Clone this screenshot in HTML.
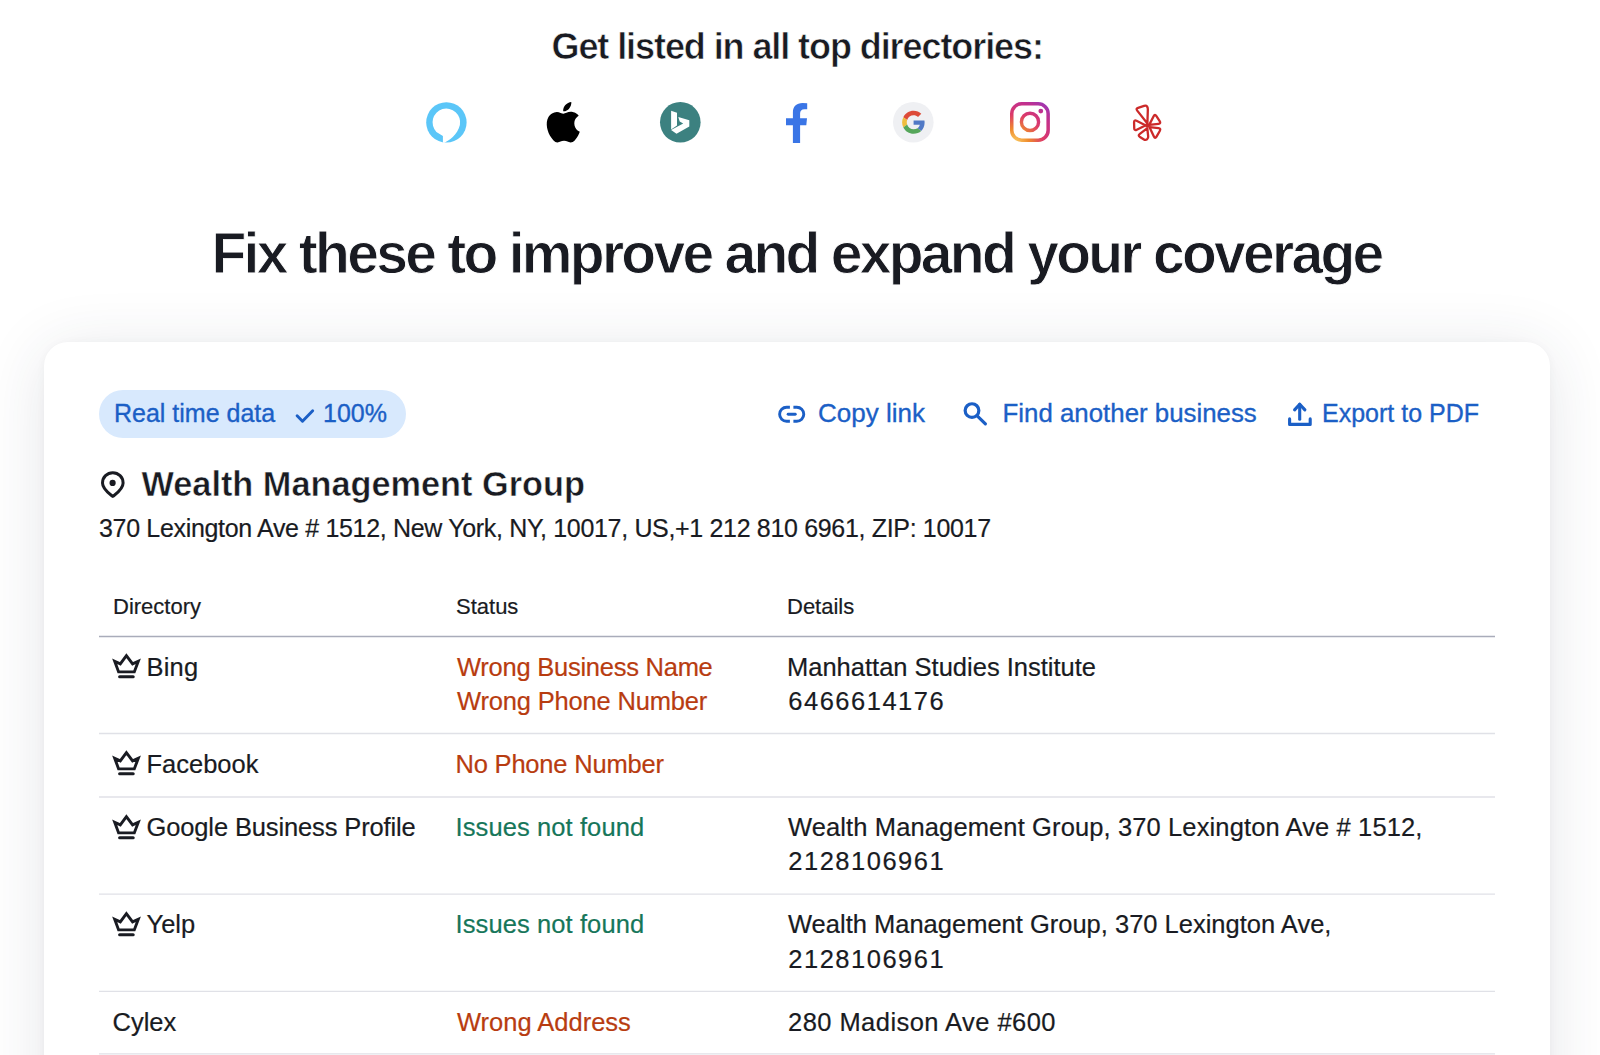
<!DOCTYPE html>
<html><head><meta charset="utf-8">
<style>
html,body{margin:0;padding:0;background:#fff;}
body{width:1600px;height:1055px;overflow:hidden;position:relative;font-family:"Liberation Sans",sans-serif;color:#191b22;}
.t{position:absolute;white-space:nowrap;line-height:1;-webkit-text-stroke-width:0.2px;}
.b{font-weight:bold;}
.blue{color:#1b5fc6;-webkit-text-stroke:0.35px #1b5fc6;}
.red{color:#b83c10;}
.green{color:#16765a;}
.ic{position:absolute;overflow:visible;}
#card{position:absolute;left:44px;top:342px;width:1506px;height:800px;background:#fff;border-radius:24px;box-shadow:0 1px 10px rgba(45,50,70,0.035),0 8px 64px rgba(45,50,70,0.12);}
#pill{position:absolute;left:99px;top:390px;width:306.5px;height:48px;border-radius:24px;background:#d8e9fd;}
.hline{position:absolute;left:99px;width:1396px;height:1px;background:#dfe0e6;}
</style></head>
<body>
<div class="t b" id="t1" style="left:551.5px;top:28.5px;font-size:36px;letter-spacing:-1.08px;-webkit-text-stroke:0.6px #fff;">Get listed in all top directories:</div>

<!-- Alexa -->
<svg class="ic" style="left:426px;top:102px" width="41" height="41" viewBox="0 0 41 41">
 <circle cx="20.4" cy="20.4" r="20.2" fill="#5bc6f8"/>
 <path d="M18.4 40.7 C22.5 39 31.5 33 33.9 23 A13.8 13.8 0 1 0 10.4 29.9 L16.9 34 L16.9 40.7 Z" fill="#fff"/>
</svg>
<!-- Apple -->
<svg class="ic" style="left:542.6px;top:102.4px" width="40.5" height="40.5" viewBox="0 0 24 24">
 <path fill="#000" d="M12.152 6.896c-.948 0-2.415-1.078-3.96-1.04-2.04.027-3.91 1.183-4.961 3.014-2.117 3.675-.546 9.103 1.519 12.09 1.013 1.454 2.208 3.09 3.792 3.039 1.52-.065 2.09-.987 3.935-.987 1.831 0 2.35.987 3.96.948 1.637-.026 2.676-1.48 3.676-2.948 1.156-1.688 1.636-3.325 1.662-3.415-.039-.013-3.182-1.221-3.22-4.857-.026-3.04 2.48-4.494 2.597-4.559-1.429-2.09-3.623-2.324-4.39-2.376-2-.156-3.675 1.09-4.61 1.09zM15.53 3.83c.843-1.012 1.4-2.427 1.245-3.83-1.207.052-2.662.805-3.532 1.818-.78.896-1.454 2.338-1.273 3.714 1.338.104 2.715-.688 3.559-1.701"/>
</svg>
<!-- Bing -->
<svg class="ic" style="left:659.9px;top:102.2px" width="41" height="41" viewBox="0 0 41 41">
 <circle cx="20.3" cy="20.3" r="20.3" fill="#3c8180"/>
 <path fill="#fff" d="M11.1 8.8 L17 10.8 L17 23.4 L11.1 27.5 Z"/>
 <path fill="#fff" d="M18.3 15 L29.3 18.2 L29.3 24.4 L16.5 31.8 L11.1 28 L23.2 21.4 L19.7 19.4 Z"/>
</svg>
<!-- Facebook -->
<svg class="ic" style="left:786px;top:102.65px" width="22" height="40" viewBox="0 0 22 40">
 <path fill="#3a75e6" d="M6.9 39.95 L6.9 22.15 L0 22.15 L0 15.25 L6.9 15.25 L6.9 9.5 C6.9 3.5 10.5 0 16.5 0 L21.2 0.2 L21.2 6.15 L18.5 6.15 C15.5 6.15 14.1 8 14.1 10.5 L14.1 15.25 L21 15.25 L20.3 22.15 L14.1 22.15 L14.1 39.95 Z"/>
</svg>
<!-- Google -->
<svg class="ic" style="left:893.2px;top:102.2px" width="41" height="41" viewBox="0 0 41 41">
 <circle cx="20.3" cy="20.2" r="20.3" fill="#eff0f3"/>
 <g transform="translate(9.1 8.8) scale(0.479)">
  <path fill="#dd4b39" d="M24 9.5c3.54 0 6.71 1.22 9.21 3.6l6.85-6.85C35.9 2.38 30.47 0 24 0 14.62 0 6.51 5.38 2.56 13.22l7.98 6.19C12.43 13.72 17.74 9.5 24 9.5z"/>
  <path fill="#5079c6" d="M46.98 24.55c0-1.570-.15-3.09-.38-4.55H24v9.02h12.94c-.58 2.96-2.26 5.48-4.78 7.18l7.73 6c4.51-4.18 7.09-10.36 7.09-17.65z"/>
  <path fill="#efbd3e" d="M10.53 28.59c-.48-1.450-.76-2.99-.76-4.59s.27-3.14.76-4.59l-7.98-6.19C.92 16.46 0 20.12 0 24c0 3.88.92 7.54 2.56 10.78l7.97-6.19z"/>
  <path fill="#55a65a" d="M24 48c6.48 0 11.93-2.13 15.89-5.81l-7.730-6c-2.15 1.45-4.92 2.3-8.16 2.3-6.26 0-11.57-4.22-13.47-9.91l-7.98 6.19C6.51 42.62 14.62 48 24 48z"/>
 </g>
</svg>
<!-- Instagram -->
<svg class="ic" style="left:1010.4px;top:102.4px" width="40" height="40" viewBox="0 0 40 40">
 <defs>
  <radialGradient id="ig" gradientUnits="userSpaceOnUse" cx="4" cy="42" r="54">
   <stop offset="0" stop-color="#fbd46a"/>
   <stop offset="0.28" stop-color="#ef8a2e"/>
   <stop offset="0.55" stop-color="#dc3a6a"/>
   <stop offset="0.78" stop-color="#c2308e"/>
   <stop offset="1" stop-color="#8f3ac2"/>
  </radialGradient>
 </defs>
 <rect x="1.75" y="1.75" width="36.4" height="36.4" rx="10" ry="10" fill="none" stroke="url(#ig)" stroke-width="3.5"/>
 <circle cx="20" cy="19.9" r="8.6" fill="none" stroke="url(#ig)" stroke-width="3.4"/>
 <circle cx="30.8" cy="9.1" r="2.4" fill="url(#ig)"/>
</svg>
<!-- Yelp -->
<svg class="ic" style="left:1121px;top:96px" width="52" height="52" viewBox="0 0 52 52">
 <g fill="none" stroke="#cc2a2a" stroke-width="2.3" stroke-linejoin="round">
  <path d="M17.08 11.81 L23.11 9.87 Q25.20 9.20 26.01 10.39 L26.09 10.51 Q26.90 11.70 26.84 13.50 L26.41 27.10 Q26.40 27.40 26.21 27.17 L16.22 14.63 Q14.60 12.60 17.08 11.81 Z"/>
  <path d="M28.34 28.63 L32.62 20.29 Q33.90 17.80 35.43 20.15 L38.67 25.15 Q40.20 27.50 37.42 27.82 L28.50 28.87 Q28.20 28.90 28.34 28.63 Z"/>
  <path d="M24.33 29.17 L15.51 24.83 Q13.00 23.60 13.07 26.40 L13.23 32.10 Q13.30 34.90 15.81 33.66 L24.33 29.43 Q24.60 29.30 24.33 29.17 Z"/>
  <path d="M26.06 32.38 L18.84 37.82 Q16.60 39.50 18.99 40.96 L22.55 43.15 Q24.60 44.40 25.93 43.35 L26.07 43.25 Q27.40 42.20 27.20 40.41 L26.33 32.50 Q26.30 32.20 26.06 32.38 Z"/>
  <path d="M28.70 31.04 L37.43 32.22 Q40.20 32.60 38.78 35.02 L35.52 40.58 Q34.10 43.00 32.90 40.47 L28.53 31.27 Q28.40 31.00 28.70 31.04 Z"/>
 </g>
 <circle cx="26.3" cy="29.5" r="2.3" fill="#cc2a2a"/>
</svg>

<div class="t b" id="t2" style="left:211.5px;top:224.5px;font-size:57px;letter-spacing:-2.72px;-webkit-text-stroke:0.9px #fff;">Fix these to improve and expand your coverage</div>

<div id="card"></div>
<div id="pill"></div>
<div class="t blue" id="pt" style="left:114px;top:401px;font-size:25px;">Real time data</div>
<svg class="ic" style="left:290px;top:400px" width="30" height="30" viewBox="0 0 30 30">
 <path d="M7.1 15.8 L12.5 21.3 L22.7 10.8" fill="none" stroke="#1b5fc6" stroke-width="2.9" stroke-linecap="round" stroke-linejoin="round"/>
</svg>
<div class="t blue" id="p100" style="left:323px;top:401px;font-size:25px;">100%</div>

<!-- link -->
<svg class="ic" style="left:774px;top:398px" width="36" height="32" viewBox="0 0 36 32">
 <g fill="none" stroke="#1b5fc6" stroke-width="2.9">
  <path d="M15.9 9.25 H12.6 A6.97 6.97 0 0 0 12.6 23.2 H15.9"/>
  <path d="M19.4 9.25 H22.8 A6.97 6.97 0 0 1 22.8 23.2 H19.4"/>
  <path d="M14.15 16.2 H21.25" stroke-linecap="round"/>
 </g>
</svg>
<div class="t blue" id="cl" style="left:818px;top:400px;font-size:26px;">Copy link</div>
<!-- search -->
<svg class="ic" style="left:958px;top:396px" width="36" height="36" viewBox="0 0 36 36">
 <g fill="none" stroke="#1b5fc6" stroke-width="3.2" stroke-linecap="round">
  <circle cx="14" cy="14.6" r="6.85"/>
  <path d="M19.2 19.8 L27.4 27.8"/>
 </g>
</svg>
<div class="t blue" id="fab" style="left:1002.5px;top:401px;font-size:25.85px;">Find another business</div>
<!-- upload -->
<svg class="ic" style="left:1282px;top:396px" width="36" height="36" viewBox="0 0 36 36">
 <g fill="none" stroke="#1b5fc6" stroke-width="3.1" stroke-linecap="round" stroke-linejoin="round">
  <path d="M17.7 8.2 V23.3"/>
  <path d="M12.6 13.9 L17.7 8.2 L22.9 13.9"/>
  <path d="M7.6 22.9 V28.4 H28.2 V22.9"/>
 </g>
</svg>
<div class="t blue" id="exp" style="left:1322px;top:401.3px;font-size:25px;">Export to PDF</div>

<!-- pin -->
<svg class="ic" style="left:96px;top:466px" width="34" height="36" viewBox="0 0 34 36">
 <path d="M16.8 30.4 C12.8 27.2 6.5 23.2 6.5 16.95 A10.3 10.3 0 1 1 27.1 16.95 C27.1 23.2 20.8 27.2 16.8 30.4 Z" fill="none" stroke="#191b22" stroke-width="3" stroke-linejoin="round"/>
 <circle cx="16.6" cy="16.9" r="3.1" fill="#191b22"/>
</svg>
<div class="t b" id="wmg" style="left:141.5px;top:467px;font-size:34.3px;-webkit-text-stroke:0.5px #fff;">Wealth Management Group</div>
<div class="t" id="addr" style="left:99px;top:516px;font-size:25px;letter-spacing:-0.33px;">370 Lexington Ave # 1512, New York, NY, 10017, US,+1 212 810 6961, ZIP: 10017</div>

<div class="t" id="hd" style="left:113px;top:596px;font-size:22px;">Directory</div>
<div class="t" id="hs" style="left:456px;top:596px;font-size:22px;">Status</div>
<div class="t" id="hdt" style="left:787px;top:596px;font-size:22px;">Details</div>
<svg width="0" height="0" style="position:absolute"><defs><symbol id="crown" viewBox="0 0 36 36"><g fill="none" stroke="#191b22" stroke-width="2.9" stroke-linejoin="miter" stroke-miterlimit="10"><path d="M6.7 13.3 L12.3 15.9 L18.4 7.6 L24.6 15.9 L30.3 13.3 L26.3 23.9 L10.6 23.9 Z"/><path d="M11.6 28.85 H25.2" stroke-width="3" stroke-linecap="round"/></g></symbol></defs></svg>
<svg class="ic" style="left:0;top:0" width="1600" height="1055"><g stroke-width="1.5"><line x1="99" y1="636.5" x2="1495" y2="636.5" stroke="#a9acba"/></g><g stroke="#e0e1e7" stroke-width="1.3"><line x1="99" y1="733.5" x2="1495" y2="733.5"/><line x1="99" y1="797" x2="1495" y2="797"/><line x1="99" y1="894.2" x2="1495" y2="894.2"/><line x1="99" y1="991.4" x2="1495" y2="991.4"/><line x1="99" y1="1053.8" x2="1495" y2="1053.8"/></g></svg>
<svg class="ic" style="left:108px;top:648px" width="36" height="36"><use href="#crown"/></svg>
<div class="t " style="left:146.5px;top:654.61px;font-size:25.5px;letter-spacing:0.2px;">Bing</div>
<div class="t red" style="left:457px;top:654.61px;font-size:25.5px;letter-spacing:-0.25px;">Wrong Business Name</div>
<div class="t red" style="left:457px;top:688.71px;font-size:25.5px;letter-spacing:-0.17px;">Wrong Phone Number</div>
<div class="t " style="left:787px;top:654.61px;font-size:25.5px;">Manhattan Studies Institute</div>
<div class="t " style="left:788.3px;top:688.71px;font-size:25.5px;letter-spacing:1.5px;">6466614176</div>
<svg class="ic" style="left:108px;top:745px" width="36" height="36"><use href="#crown"/></svg>
<div class="t " style="left:146.5px;top:751.91px;font-size:25.5px;">Facebook</div>
<div class="t red" style="left:455.5px;top:751.91px;font-size:25.5px;letter-spacing:-0.2px;">No Phone Number</div>
<svg class="ic" style="left:108px;top:808.5px" width="36" height="36"><use href="#crown"/></svg>
<div class="t " style="left:146.5px;top:814.91px;font-size:25.5px;letter-spacing:-0.13px;">Google Business Profile</div>
<div class="t green" style="left:455.5px;top:814.91px;font-size:25.5px;letter-spacing:0.1px;">Issues not found</div>
<div class="t " style="left:788px;top:814.91px;font-size:25.5px;letter-spacing:0.12px;">Wealth Management Group, 370 Lexington Ave # 1512,</div>
<div class="t " style="left:788.3px;top:849.01px;font-size:25.5px;letter-spacing:1.5px;">2128106961</div>
<svg class="ic" style="left:108px;top:905.5px" width="36" height="36"><use href="#crown"/></svg>
<div class="t " style="left:146.5px;top:912.41px;font-size:25.5px;">Yelp</div>
<div class="t green" style="left:455.5px;top:912.41px;font-size:25.5px;letter-spacing:0.1px;">Issues not found</div>
<div class="t " style="left:788px;top:912.41px;font-size:25.5px;">Wealth Management Group, 370 Lexington Ave,</div>
<div class="t " style="left:788.3px;top:946.51px;font-size:25.5px;letter-spacing:1.5px;">2128106961</div>
<div class="t " style="left:112.5px;top:1009.91px;font-size:25.5px;">Cylex</div>
<div class="t red" style="left:457px;top:1009.91px;font-size:25.5px;">Wrong Address</div>
<div class="t " style="left:788px;top:1009.91px;font-size:25.5px;letter-spacing:0.45px;">280 Madison Ave #600</div>
</body></html>
